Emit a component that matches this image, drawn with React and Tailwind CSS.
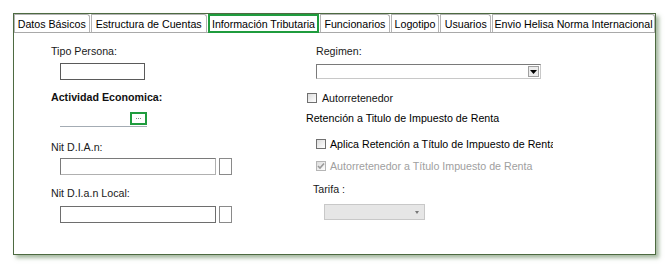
import React from "react";

const tabs = [
  { label: "Datos Básicos", w: "w-[76px]" },
  { label: "Estructura de Cuentas", w: "w-[117px]" },
  { label: "Información Tributaria", w: "w-[112px]", active: true },
  { label: "Funcionarios", w: "w-[70px]" },
  { label: "Logotipo", w: "w-[49px]" },
  { label: "Usuarios", w: "w-[51px]" },
  { label: "Envio Helisa Norma Internacional", w: "w-[164px]" },
];

function Check({ checked, disabled }) {
  return (
    <div
      className={
        "shrink-0 w-[10px] h-[10px] border flex items-center justify-center bg-gradient-to-br from-[#dcdcdc] to-white " +
        (disabled ? "border-[#b5b5b5]" : "border-[#707070]")
      }
    >
      {checked && (
        <svg width="8" height="8" viewBox="0 0 8 8">
          <path d="M1 4 L3 6 L7 1.5" fill="none" stroke="#9a9a9a" strokeWidth="1.6" />
        </svg>
      )}
    </div>
  );
}

export default function App() {
  return (
    <div
      className="w-[672px] h-[272px] bg-white pt-[13px] pl-[13px] text-[10.67px] text-[#111]"
      style={{ fontFamily: '"Liberation Sans", Arial, sans-serif' }}
    >
      <div className="w-[643px] h-[242px] border border-[#4d6a41] bg-white shadow-[3px_3px_4px_rgba(90,125,80,0.55)] flex flex-col">
        {/* tabs */}
        <div className="h-[19px] flex items-end border-b border-[#a9a9a9] gap-[1px]">
          {tabs.map((t) =>
            t.active ? (
              <div
                key={t.label}
                className={t.w + " h-[19px] border-2 border-[#1f9c3e] flex items-center justify-center leading-[14px] text-black bg-white -mb-[1px]"}
              >
                {t.label}
              </div>
            ) : (
              <div
                key={t.label}
                className={t.w + " h-[18px] border border-b-0 border-[#b4b4b4] rounded-tr-[3px] flex items-center justify-center leading-[14px] text-black"}
              >
                {t.label}
              </div>
            )
          )}
        </div>

        {/* content */}
        <div className="flex flex-1">
          {/* left column */}
          <div className="w-[292px] pl-[37px] pt-[11px] flex flex-col">
            <div className="h-[14px] leading-[14px] text-[#1a1a1a]">Tipo Persona:</div>
            <div className="mt-[5px] ml-[9px] w-[85px] h-[17px] border border-[#5a5a5a]" />

            <div className="mt-[10px] h-[14px] leading-[14px] font-bold text-[#111]">Actividad Economica:</div>
            <div className="mt-[8px] ml-[9px] w-[87px] h-[15px] border-b border-[#a4acb4] flex justify-end">
              <div className="w-[17px] h-[13px] border-2 border-[#1f9c3e] bg-white flex items-center justify-center gap-[1px]">
                <span className="w-[1px] h-[1px] bg-[#888]" />
                <span className="w-[1px] h-[1px] bg-[#888]" />
                <span className="w-[1px] h-[1px] bg-[#888]" />
              </div>
            </div>

            <div className="mt-[13px] h-[14px] leading-[14px] text-[#1a1a1a]">Nit D.I.A.n:</div>
            <div className="mt-[4px] ml-[9px] flex gap-[3px]">
              <div className="w-[156px] h-[17px] border border-[#7a7a7a] border-r-[#b0b0b0] border-b-[#b0b0b0]" />
              <div className="w-[13px] h-[17px] border border-[#8a8a8a]" />
            </div>

            <div className="mt-[11px] h-[14px] leading-[14px] text-[#1a1a1a]">Nit D.I.a.n Local:</div>
            <div className="mt-[6px] ml-[9px] flex gap-[3px]">
              <div className="w-[156px] h-[17px] border border-[#6e6e6e]" />
              <div className="w-[13px] h-[17px] border border-[#8a8a8a]" />
            </div>
          </div>

          {/* right column */}
          <div className="w-[247px] pt-[11px] flex flex-col overflow-hidden">
            <div className="ml-[10px] h-[14px] leading-[14px] text-[#1a1a1a]">Regimen:</div>
            <div className="mt-[6px] ml-[10px] w-[225px] h-[15px] border border-[#7a7a7a] border-r-[#c8c8c8] border-b-[#c8c8c8] flex justify-end items-center pr-[1px]">
              <div className="w-[11px] h-[11px] bg-[#ececec] border border-[#a0a0a0] flex items-center justify-center">
                <svg width="7" height="4" viewBox="0 0 7 4">
                  <path d="M0 0 H7 L3.5 4 Z" fill="#000" />
                </svg>
              </div>
            </div>

            <div className="mt-[12px] ml-[1px] h-[14px] flex items-center gap-[5px]">
              <Check />
              <span className="leading-[14px]">Autorretenedor</span>
            </div>

            <div className="mt-[6px] h-[14px] leading-[14px] text-black">
              Retención a Titulo de Impuesto de Renta
            </div>

            <div className="mt-[12px] ml-[10px] h-[14px] flex items-center gap-[4px] whitespace-nowrap">
              <Check />
              <span className="leading-[14px] text-black">Aplica Retención a Título de Impuesto de Renta</span>
            </div>

            <div className="mt-[8px] ml-[10px] h-[14px] flex items-center gap-[4px] whitespace-nowrap">
              <Check checked disabled />
              <span className="leading-[14px] text-[#a0a0a0]">Autorretenedor a Título Impuesto de Renta</span>
            </div>

            <div className="mt-[9px] ml-[7px] h-[14px] leading-[14px] text-[#1a1a1a]">Tarifa :</div>
            <div className="mt-[8px] ml-[18px] w-[101px] h-[16px] border border-[#c8c8c8] bg-[#e6e6e6] flex items-center justify-end pr-[5px]">
              <svg width="4" height="3" viewBox="0 0 4 3">
                <path d="M0 0 H4 L2 3 Z" fill="#777" />
              </svg>
            </div>
          </div>
        </div>
      </div>
    </div>
  );
}
